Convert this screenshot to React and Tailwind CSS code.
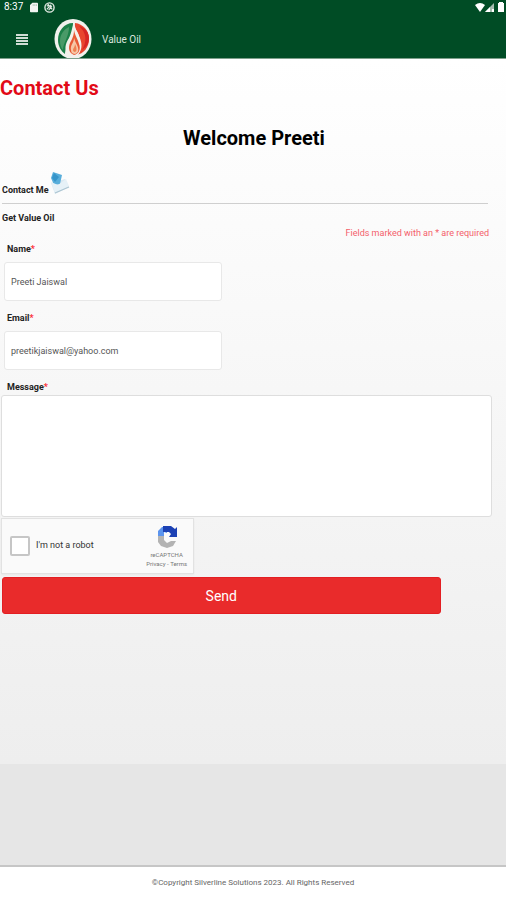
import { useState } from 'react';

function Logo() {
  return (
    <svg viewBox="0 0 38 40" className="w-[38px] h-10 self-end shrink-0" aria-hidden="true">
      <ellipse cx="19" cy="21" rx="18.5" ry="20" fill="#f1f1ed" />
      <path d="M19 5C10 5 4 13 4 22c0 6 3 11 7 14 0-5 3-9 5-13 2-6 3-11 3-18z" fill="#1c8048" />
      <path d="M15 9C9 12 6 17 6 23c0 4 1 7 3 9 0-7 6-13 6-23z" fill="#4a9a68" />
      <path d="M21 5c-1 6 3 8 4 13 2 7 2 13-3 19 8-1 13-8 13-16C35 12 29 6 21 5z" fill="#e8452e" />
      <path d="M25 8c8 7 8 16 3 24 5-3 7-7 7-12 0-6-4-10-10-12z" fill="#d62524" />
      <path d="M20 3c-2 8-3 13-5 17-4 6-5 12-1 17h10c5-6 4-13 1-19-2-5-5-8-5-15z" fill="#f4f1ea" />
      <path d="M20 12c0 6-2 9-4 13-2 5-1 10 4 12 5-1 7-6 5-11-1-5-4-8-5-14z" fill="#e85a35" />
      <path d="M20 20c0 5-4 7-3 12 0 3 2 4 4 4 4-1 4-5 2-9-1-2-2-4-3-7z" fill="#f7c7a6" />
      <path d="M21 26c0 3-2 4-2 6 0 1 1 2 2 2 2-1 2-4 0-8z" fill="#ee8050" />
    </svg>
  );
}

function Envelope() {
  return (
    <svg viewBox="0 0 22 24" className="w-[22px] h-6" aria-hidden="true">
      <path d="M2 12 16 8l4 8-14 7z" fill="#dbe9f1" />
      <path d="M4 1l9 3-2 9-6 1-3-7z" fill="#58aedb" />
      <path d="M5 2l5 4-4 5-3-4z" fill="#3695ca" />
      <path d="M2 11l7 3 8-6 3 7-14 7z" fill="#e6f1f7" />
      <path d="M6 22l14-6" fill="none" stroke="#adc5d2" strokeWidth="1.2" />
    </svg>
  );
}

function Recaptcha() {
  return (
    <svg viewBox="0 0 22 23" className="w-[22px] h-[23px]" aria-hidden="true">
      <path d="M2 11V6l4-4h5v6L8 7v4z" fill="#5b94ee" />
      <path d="M7 1h8l4 3 2-2v10h-8l2-3-2-2H7z" fill="#1c41b4" />
      <path d="M2 11h6v4l3 3 4-2h5l-3 5-6 2-6-2-3-4z" fill="#b3b3b3" />
    </svg>
  );
}

function StatusBar() {
  return (
    <div className="flex items-center h-[14px] pl-1 pr-px text-[10px] leading-[14px]">
      <span>8:37</span>
      <svg viewBox="0 0 10 12" className="w-2 h-[11px] ml-[7px]" fill="#f2f5f2" aria-hidden="true">
        <path d="M3 0h6q1 0 1 1v10q0 1-1 1H1q-1 0-1-1V3z" />
        <path d="M4 2v2M6 2v2M8 2v2" stroke="#9db8a8" />
      </svg>
      <svg viewBox="0 0 12 12" className="w-[11px] h-[11px] ml-[6px]" fill="none" stroke="#e4ece6" aria-hidden="true">
        <circle cx="6" cy="6" r="5" strokeWidth="1.5" />
        <path d="M3 4l5 1-3 4M4 2l5 6M3 8l5-5" strokeWidth="1.3" />
      </svg>
      <svg viewBox="0 0 30 11" className="w-[30px] h-[11px] ml-auto" fill="#fff" aria-hidden="true">
        <path d="M0 3q5-4 10 0L5 10z" />
        <path d="M19 1v9h-9z" fill="#a4bbae" />
        <path d="M15 5v5h-5zM17 7h2v3h-2z" />
        <path d="M23 1h1V0h4v1h1v9h-6z" />
      </svg>
    </div>
  );
}

function Field({ id, label, type, value, onChange }) {
  return (
    <div className="pl-1">
      <label htmlFor={id} className="block pl-[3px] text-[9px] leading-4 font-bold">
        {label}<span className="text-red-500">*</span>
      </label>
      <input
        id={id}
        type={type}
        value={value}
        onChange={onChange}
        className="block mt-[5px] mb-[9px] w-[218px] max-w-full h-[39px] px-[6px] rounded-[3px] border border-[#e8e8e8] bg-white text-[9px] text-[#555] outline-none"
      />
    </div>
  );
}

export default function App() {
  const [form, setForm] = useState({ name: 'Preeti Jaiswal', email: 'preetikjaiswal@yahoo.com', message: '' });
  const update = (key) => (e) => setForm({ ...form, [key]: e.target.value });

  return (
    <div className="min-h-screen flex flex-col bg-[#e6e6e6] text-[#222] font-['Roboto',sans-serif]">
      <header className="bg-[#004c25] text-white border-b border-[#7d9f8b]">
        <StatusBar />
        <div className="flex items-center h-11 pl-4 pt-[6px]">
          <button type="button" aria-label="Menu" className="w-3 mr-[26px] space-y-px">
            <span className="block h-[2px] bg-[#cfdcd4]" />
            <span className="block h-[2px] bg-[#cfdcd4]" />
            <span className="block h-[2px] bg-[#cfdcd4]" />
            <span className="block h-[2px] bg-[#cfdcd4]" />
          </button>
          <Logo />
          <span className="ml-[10px] text-[10px] text-[#dbe6df]">Value Oil</span>
        </div>
      </header>

      <main className="bg-linear-to-b from-white to-[#eeeeee] pb-[150px]">
        <h1 className="pt-4 text-xl leading-[26px] font-bold text-[#e20a17]">Contact Us</h1>
        <h2 className="pt-6 text-xl leading-[26px] font-bold text-black text-center pl-[2px]">Welcome Preeti</h2>

        <div className="ml-[2px] mr-[18px] mt-5 flex items-end border-b border-[#cfcfcf] pb-[6px]">
          <h3 className="text-[9px] leading-[14px] font-bold">Contact Me</h3>
          <div className="pb-[2px]"><Envelope /></div>
        </div>
        <p className="pl-[2px] pt-2 text-[9px] leading-3 font-bold">Get Value Oil</p>
        <p className="pr-[17px] pt-[3px] text-right text-[9px] leading-3 text-[#f4606a]">Fields marked with an * are required</p>

        <form onSubmit={(e) => e.preventDefault()} className="pt-[2px]">
          <Field id="name" label="Name" type="text" value={form.name} onChange={update('name')} />
          <Field id="email" label="Email" type="email" value={form.email} onChange={update('email')} />
          <div className="pl-px pr-[14px]">
            <label htmlFor="message" className="block pl-[6px] text-[9px] leading-4 font-bold">
              Message<span className="text-red-500">*</span>
            </label>
            <textarea
              id="message"
              value={form.message}
              onChange={update('message')}
              className="block w-full h-[122px] p-2 rounded-[3px] border border-[#dedede] bg-white text-[9px] resize-none outline-none"
            />
          </div>

          <div className="mt-px ml-px flex items-center w-[193px] h-14 pl-2 pr-[6px] border border-[#e2e2e2] bg-[#fafafa] shadow-xs">
            <input id="robot" type="checkbox" className="appearance-none w-5 h-5 rounded-[2px] border-2 border-[#c6c6c6] bg-white" />
            <label htmlFor="robot" className="pl-[6px] text-[9px] text-[#333]">I'm not a robot</label>
            <div className="ml-auto flex flex-col items-center text-[#777]">
              <Recaptcha />
              <span className="pt-[2px] text-[6px] leading-[10px]">reCAPTCHA</span>
              <span className="text-[6px] leading-2">
                <a href="#privacy">Privacy</a> - <a href="#terms">Terms</a>
              </span>
            </div>
          </div>

          <button type="submit" className="block mt-[3px] ml-[2px] w-13/15 h-[37px] rounded-[3px] bg-[#e92b2b] border border-[#e31e22] text-white text-sm">
            Send
          </button>
        </form>
      </main>

      <footer className="mt-auto h-[35px] pt-[10px] border-t-2 border-[#c6c6c6] bg-white text-center text-[8px] leading-3 text-[#666]">
        ©Copyright Silverline Solutions 2023. All Rights Reserved
      </footer>
    </div>
  );
}
